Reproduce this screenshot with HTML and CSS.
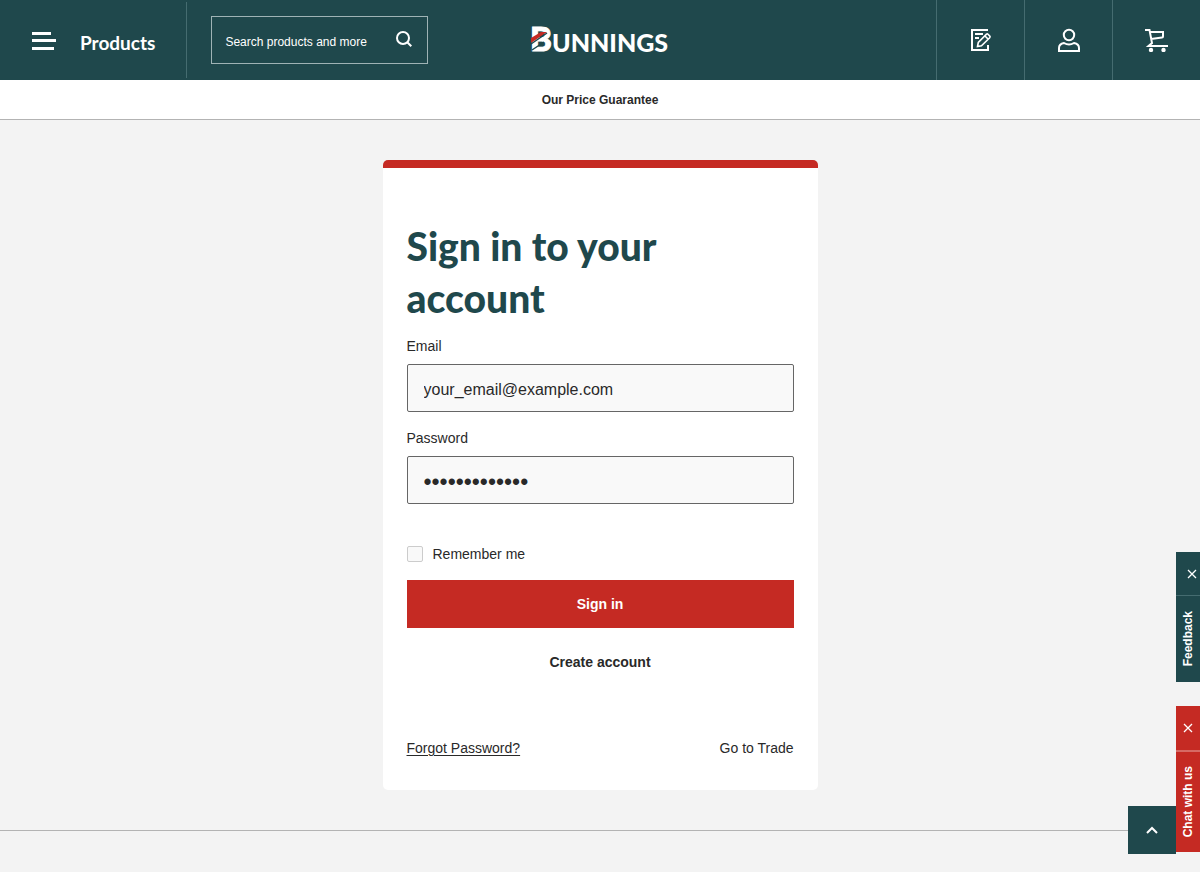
FILE: index.html
```html
<!DOCTYPE html>
<html lang="en">
<head>
<meta charset="utf-8">
<meta name="viewport" content="width=device-width, initial-scale=1">
<title>Sign in | Bunnings</title>
<link rel="stylesheet" href="styles.css">
</head>
<body>
<header class="header">
  <div class="header-start">
    <button class="menu" type="button">
      <svg width="24" height="18" viewBox="0 0 24 18" fill="#fff" aria-hidden="true"><path d="M0 0h19v3H0zM0 7h24v3H0zM0 15h22v3H0z"/></svg>
      <span class="menu-text">Products</span>
    </button>
    <form class="search" role="search">
      <input class="search-input" type="search" placeholder="Search products and more" aria-label="Search products and more">
      <button class="search-button" type="button" aria-label="Search">
        <svg width="18" height="18" viewBox="0 0 18 18" fill="none" stroke="#fff" stroke-width="2" aria-hidden="true"><circle cx="8" cy="8" r="6"/><path d="M12.300 12.300 16.300 16.300"/></svg>
      </button>
    </form>
  </div>
  <a class="logo" href="#" aria-label="Bunnings">
    <svg width="140" height="32" viewBox="0 0 140 32">
      <text class="logo-initial" x="0" y="27">B</text>
      <text class="logo-text" x="22" y="28">UNNINGS</text>
      <path fill="#c52a23" d="M1 19v-5L11 8h6z"/>
      <path stroke="#1f484c" stroke-width="1.500" d="M1 20 17 9M2 26 14 18"/>
    </svg>
  </a>
  <nav class="actions" aria-label="Account">
    <a class="action" href="#" aria-label="Lists">
      <svg width="24" height="24" viewBox="0 0 24 24" fill="none" stroke="#fff" stroke-width="2" aria-hidden="true"><path d="M19 2H3v20h16v-5M6 6h8M6 10h4"/><path stroke-width="1.600" d="M8.500 18.500 9.300 14.500 17.500 6.200Q18.300 5.600 19 6.300L20.800 8.100Q21.500 8.900 20.700 9.700L12.500 17.800zM16 8l3 3"/></svg>
    </a>
    <a class="action" href="#" aria-label="My account">
      <svg width="24" height="24" viewBox="0 0 24 24" fill="none" stroke="#fff" stroke-width="2" aria-hidden="true"><circle cx="12" cy="7" r="5.200"/><path d="M7 15Q2 16 2 20v3h20v-3q0-4-5-5-5 3-10 0z"/></svg>
    </a>
    <a class="action" href="#" aria-label="Cart">
      <svg width="24" height="24" viewBox="0 0 24 24" fill="none" stroke="#fff" stroke-width="2" aria-hidden="true"><path d="M0 2h4.500L7 15 3.500 18H23M4.500 4H18v4.500Q18 9.500 17 9.600L6 11"/><g fill="#fff" stroke="none"><circle cx="6" cy="22" r="2.200"/><circle cx="18.500" cy="22" r="2.200"/></g></svg>
    </a>
  </nav>
</header>
<div class="promo"><a href="#">Our Price Guarantee</a></div>
<main class="main">
  <form class="card">
    <h1 class="title">Sign in to your account</h1>
    <div class="field">
      <label for="email">Email</label>
      <input class="input" id="email" type="email" value="your_email@example.com">
    </div>
    <div class="field">
      <label for="password">Password</label>
      <input class="input password" id="password" type="password" value="examplepasswd">
    </div>
    <div class="remember">
      <input class="check" id="remember" type="checkbox">
      <label for="remember">Remember me</label>
    </div>
    <button class="submit" type="button">Sign in</button>
    <button class="create" type="button">Create account</button>
    <div class="links">
      <a class="forgot" href="#">Forgot Password?</a>
      <a href="#">Go to Trade</a>
    </div>
  </form>
</main>
<footer class="footer"></footer>
<aside class="side-tab feedback">
  <button class="tab-close" type="button" aria-label="Close feedback"><svg width="10" height="10" viewBox="0 0 10 10" stroke="#fff" stroke-width="1.300" aria-hidden="true"><path d="M1 1 9 9M9 1 1 9"/></svg></button>
  <button class="tab-label" type="button">Feedback</button>
</aside>
<aside class="side-tab chat">
  <button class="tab-close" type="button" aria-label="Close chat"><svg width="10" height="10" viewBox="0 0 10 10" stroke="#fff" stroke-width="1.300" aria-hidden="true"><path d="M1 1 9 9M9 1 1 9"/></svg></button>
  <button class="tab-label" type="button">Chat with us</button>
</aside>
<button class="to-top" type="button" aria-label="Back to top"><svg width="14" height="10" viewBox="0 0 14 10" fill="none" stroke="#fff" stroke-width="2" aria-hidden="true"><path d="M2 8 7 3 12 8"/></svg></button>
</body>
</html>
```
FILE: styles.css
```css
* { box-sizing: border-box; }

body {
  margin: 0;
  min-height: 100vh;
  background: #f3f3f3;
  color: #292929;
  font: 14px/20px "Liberation Sans", Arial, sans-serif;
}

button, input { font: inherit; color: inherit; }
button { padding: 0; border: 0; background: none; cursor: pointer; }
a { color: inherit; text-decoration: none; }
svg { display: block; }

.header {
  display: grid;
  grid-template-columns: 1fr auto 1fr;
  align-items: center;
  height: 80px;
  background: #1f484c;
  color: #fff;
}

.header-start { display: flex; align-items: center; gap: 24px; }

.menu {
  display: flex;
  align-items: center;
  gap: 24px;
  height: 76px;
  padding: 2px 31px 0 32px;
  border-right: 1px solid #456c70;
  font: bold 19px/24px Lato, sans-serif;
}

.menu-text { padding-top: 4px; }

.search {
  display: flex;
  align-items: center;
  width: 217px;
  height: 48px;
  border: 1px solid #9fb3b5;
}

.search-input {
  flex: 1;
  min-width: 0;
  height: 46px;
  padding: 4px 0 0 13px;
  border: 0;
  outline: 0;
  background: none;
  font-size: 12px;
  appearance: none;
}

.search-input::placeholder { color: #fff; opacity: 1; }
.search-button { padding: 0 14px 2px 8px; }

.logo-initial, .logo-text { fill: #fff; font-family: Lato, sans-serif; }
.logo-initial { font-size: 33px; font-weight: 900; stroke: #fff; stroke-width: 1px; }
.logo-text { font-size: 25px; font-weight: 900; }

.actions { display: flex; justify-content: flex-end; }

.action {
  display: grid;
  place-items: center;
  width: 88px;
  height: 80px;
  border-left: 1px solid #456c70;
}

.promo {
  display: flex;
  align-items: center;
  justify-content: center;
  height: 40px;
  border-bottom: 1px solid #b3b3b3;
  background: #fff;
  font-size: 12px;
  font-weight: bold;
}

.main { display: flex; justify-content: center; padding: 40px 16px; }

.card {
  display: flex;
  flex-direction: column;
  width: 100%;
  max-width: 435px;
  padding: 52px 24px 32px;
  border-top: 8px solid #c52a23;
  border-radius: 5px;
  background: #fff;
}

.title {
  margin: 0 0 12px;
  color: #1f484c;
  font: 900 39px/52px Lato, sans-serif;
}

.field { display: flex; flex-direction: column; gap: 8px; margin-bottom: 16px; }

.input {
  width: 100%;
  height: 48px;
  padding: 4px 16px 0;
  border: 1px solid #666;
  border-radius: 2px;
  background: #f9f9f9;
  font-size: 16px;
}

.password { font-size: 23px; }

.remember { display: flex; align-items: center; gap: 10px; margin: 24px 0 16px; }

.check {
  width: 16px;
  height: 16px;
  margin: 0;
  border: 1px solid #ccc;
  border-radius: 2px;
  background: #f9f9f9;
  appearance: none;
}

.check:checked { background: #1f484c; }

.submit { height: 48px; background: #c52a23; color: #fff; font-weight: bold; }
.create { align-self: center; margin-top: 10px; height: 48px; font-weight: bold; }
.links { display: flex; justify-content: space-between; margin-top: 52px; }
.forgot { text-decoration: underline; text-underline-offset: 2px; }
.footer { border-top: 1px solid #b3b3b3; }

.side-tab {
  position: fixed;
  right: 0;
  display: flex;
  flex-direction: column;
  width: 24px;
  color: #fff;
}

.feedback { bottom: 190px; height: 130px; background: #1f484c; }
.chat { bottom: 20px; height: 146px; background: #c52a23; }

.tab-close {
  display: grid;
  place-items: center;
  height: 44px;
  border-bottom: 1px solid #456c70;
}

.feedback .tab-close { padding-left: 8px; }
.chat .tab-close { height: 46px; border-bottom: 2px solid #d66a65; }

.tab-label {
  flex: 1;
  font-size: 12px;
  font-weight: bold;
  line-height: 24px;
  text-align: center;
  writing-mode: sideways-lr;
}

.to-top {
  position: fixed;
  right: 24px;
  bottom: 18px;
  display: grid;
  place-items: center;
  width: 48px;
  height: 48px;
  background: #1f484c;
}
```
